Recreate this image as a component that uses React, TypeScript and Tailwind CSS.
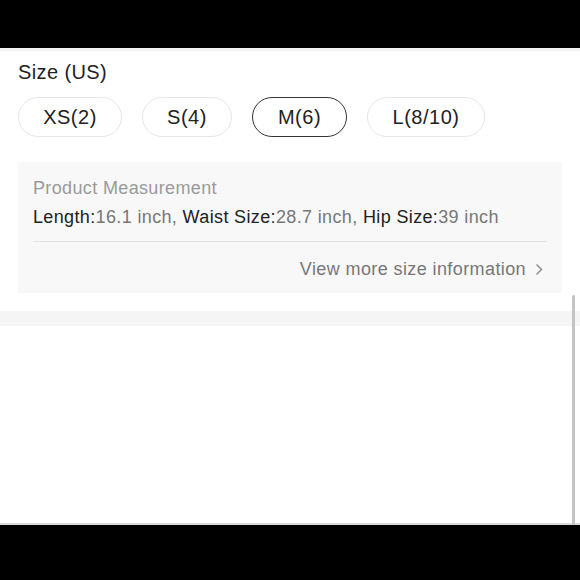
import React from "react";

const sizes = [
  { label: "XS(2)", w: "w-[104px]", selected: false },
  { label: "S(4)", w: "w-[90px]", selected: false },
  { label: "M(6)", w: "w-[95px]", selected: true },
  { label: "L(8/10)", w: "w-[118px]", selected: false },
];

export default function App() {
  return (
    <div
      className="w-[580px] h-[580px] bg-black flex flex-col overflow-hidden"
      style={{ fontFamily: '"Liberation Sans", Arial, sans-serif' }}
    >
      <div className="h-[48px] shrink-0 bg-black" />
      <div className="relative flex-1 bg-white border-t-[3px] border-[#f3f3f3] flex flex-col">
        <div className="px-[18px] pt-[9px]">
          <div className="text-[20px] leading-[24px] tracking-[0.4px] text-[#222]">Size (US)</div>
          <div className="flex gap-[20px] mt-[13px]">
            {sizes.map((s) => (
              <div
                key={s.label}
                className={`${s.w} h-[40px] rounded-full flex items-center justify-center text-[20px] tracking-[0.5px] text-[#222] ${
                  s.selected ? "border-[1.5px] border-[#333]" : "border-[1.5px] border-[#e6e6e6]"
                }`}
              >
                {s.label}
              </div>
            ))}
          </div>
          <div className="mt-[25px] w-[544px] h-[131px] bg-[#f8f8f8] px-[15px] pt-[15px] flex flex-col">
            <div className="text-[18px] leading-[22px] tracking-[0.36px] text-[#9a9a9a]">Product Measurement</div>
            <div className="text-[18px] leading-[22px] tracking-[0.36px] mt-[7px] text-[#777] whitespace-nowrap">
              <span className="text-[#222]">Length:</span>16.1 inch,{" "}
              <span className="text-[#222]">Waist Size:</span>28.7 inch,{" "}
              <span className="text-[#222]">Hip Size:</span>39 inch
            </div>
            <div className="mt-[13px] h-px bg-[#e4e4e4]" />
            <div className="mt-[16px] flex items-center justify-end gap-[9px] pr-[4px] text-[18px] leading-[22px] tracking-[0.4px] text-[#777]">
              <span>View more size information</span>
              <svg width="8" height="13" viewBox="0 0 8 13" fill="none">
                <path d="M1.5 1.5 L6.5 6.5 L1.5 11.5" stroke="#888" strokeWidth="1.4" />
              </svg>
            </div>
          </div>
        </div>
        <div className="mt-[18px] h-[15px] bg-[#f5f5f5]" />
        <div className="flex-1" />
        <div className="h-[2px] bg-[#dcdcdc]" />
        <div className="absolute right-[5px] top-[244px] bottom-0 w-[3px] rounded-full bg-[#c4c4c4]" />
      </div>
      <div className="h-[55px] shrink-0 bg-black" />
    </div>
  );
}
